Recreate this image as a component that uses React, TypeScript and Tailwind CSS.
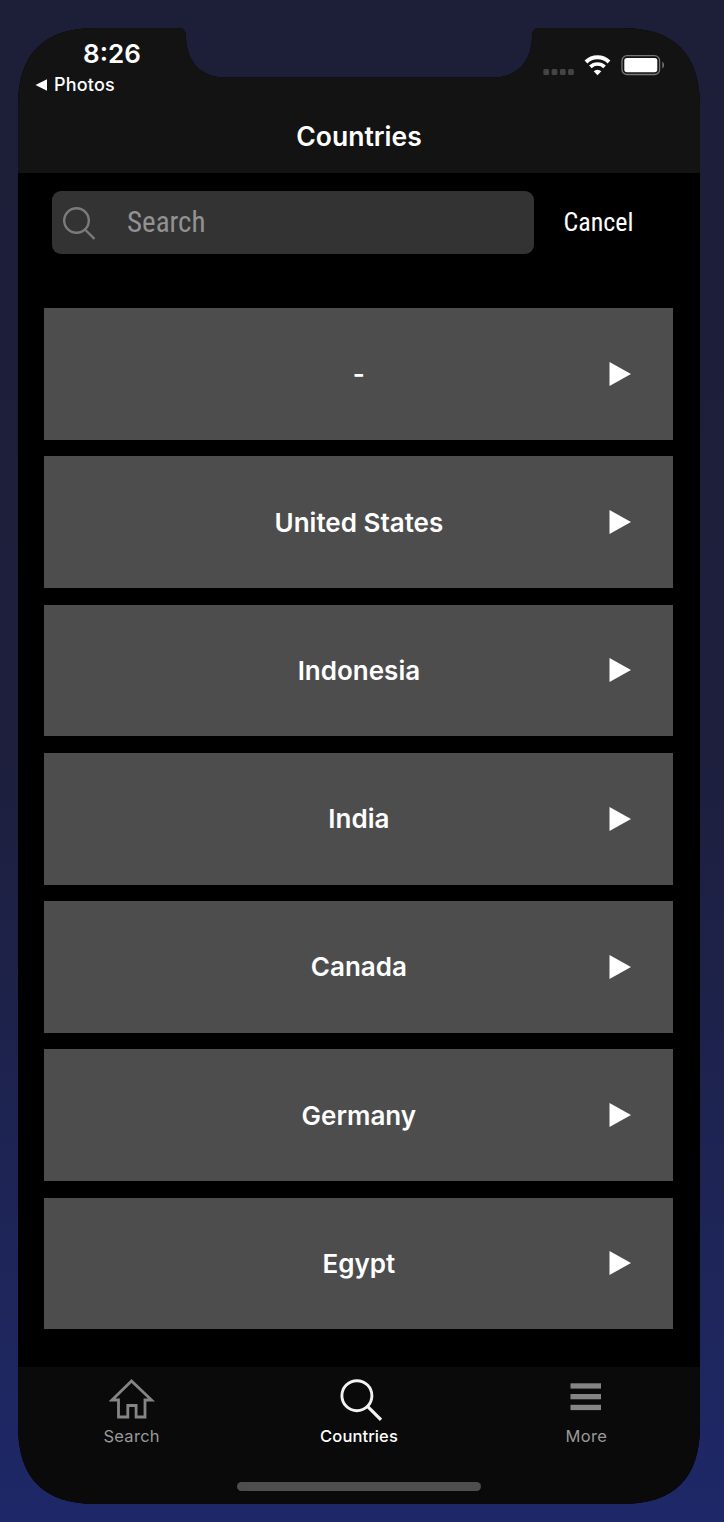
const countries = ['-', 'United States', 'Indonesia', 'India', 'Canada', 'Germany', 'Egypt'];

function StatusIcons() {
  return (
    <svg width="124" height="26" viewBox="0 0 124 26" className="block">
      <g fill="#444">
        <rect x="0.3" y="15" width="5.800" height="6" rx="1.500" />
        <rect x="8.600" y="15" width="5.800" height="6" rx="1.500" />
        <rect x="16.900" y="15" width="5.800" height="6" rx="1.500" />
        <rect x="25.100" y="15" width="5.800" height="6" rx="1.500" />
      </g>
      <g fill="none" stroke="#fff">
        <path d="M43 8a16.500 16.500 0 0 1 23 0" strokeWidth="4" />
        <path d="M47.400 12.900a10.200 10.200 0 0 1 14.200 0" strokeWidth="3.700" />
      </g>
      <path d="M54.500 21.200L50.700 17.300a5.500 5.500 0 0 1 7.600 0z" fill="#fff" />
      <rect x="79" y="1.700" width="37.600" height="18.800" rx="5" fill="none" stroke="#777" strokeWidth="1.300" />
      <rect x="81.300" y="4" width="33" height="14.200" rx="2.600" fill="#fff" />
      <path d="M119.300 7.500q1.800 1 1.800 3.600t-1.800 3.600z" fill="#777" />
    </svg>
  );
}

function HomeIcon() {
  return (
    <svg width="46" height="44" viewBox="0 0 46 44" fill="none" stroke="#858585" strokeWidth="2.800">
      <path d="M22.500 4L3 23h6.500V40h9.300V28.500h8.300V40H36V23h6.500Z" />
    </svg>
  );
}

function SearchIcon() {
  return (
    <svg width="46" height="44" viewBox="0 0 46 44" fill="none" stroke="#f2f2f2" strokeWidth="2.900">
      <circle cx="20.900" cy="18.700" r="15" />
      <path d="M31.500 29.300L45 42.800" strokeWidth="3.200" />
    </svg>
  );
}

function MenuIcon() {
  return (
    <svg width="46" height="44" viewBox="0 0 46 44" fill="#858585">
      <rect x="7.500" y="6.300" width="30.500" height="5.300" />
      <rect x="7.500" y="17" width="30.500" height="5.300" />
      <rect x="7.500" y="27.800" width="30.500" height="5.300" />
    </svg>
  );
}

export default function App() {
  return (
    <div className="h-[1522px] w-[724px] bg-linear-to-b from-[#1d1e37] via-[#1d1f3d] to-[#1e2868] pt-7 pl-[18px] font-['Inter',sans-serif] text-white">
      <div className="flex h-[1476px] w-[682px] flex-col bg-black [clip-path:path('M0_78C0_25.700_25.700_0_78_0H160C166_0_168_3_168_10C169_35_184_49.500_207_49.500H475C498_49.500_513_35_514_10C514_3_516_0_522_0H604C656.300_0_682_25.700_682_78V1398C682_1450.300_656.300_1476_604_1476H78C25.700_1476_0_1450.300_0_1398Z')]">
        <header className="h-[145px] shrink-0 bg-[#131313]">
          <div className="flex h-[79px] justify-between">
            <div className="pt-[10px] pl-[17px]">
              <div className="pl-[48px] text-[26px] leading-[32px] font-semibold">8:26</div>
              <div className="flex h-[30px] items-center gap-[7px] text-[18px] leading-[30px] font-medium tracking-[0.200px]">
                <svg width="12" height="12" viewBox="0 0 12 12" fill="currentColor"><path d="M.5 6L12 .3v11.400z" /></svg>
                <span>Photos</span>
              </div>
            </div>
            <div className="pt-[26px] pr-[33px]"><StatusIcons /></div>
          </div>
          <h1 className="pt-[11px] text-center text-[26.500px] leading-9 font-semibold">Countries</h1>
        </header>
        <div className="flex shrink-0 items-center pt-[18px] pl-[34px]">
          <div className="flex h-[63px] w-[481.500px] items-center rounded-[9px] bg-[#333] pl-[11px]">
            <svg width="32" height="34" viewBox="0 0 32 34" fill="none" stroke="#7d7b79" strokeWidth="2.400">
              <circle cx="13.500" cy="14.500" r="12.300" />
              <path d="M22.500 24L31.500 33" />
            </svg>
            <span className="ml-[32px] font-['Roboto_Condensed','Roboto',sans-serif] text-[29px] text-[#929292] font-stretch-condensed">Search</span>
          </div>
          <span className="ml-[30px] font-['Roboto_Condensed','Roboto',sans-serif] text-[26px] font-stretch-condensed">Cancel</span>
        </div>
        <ul className="flex h-[1059px] flex-col gap-[16.500px] pt-[54px] pl-[26.400px]">
          {countries.map((name) => (
            <li key={name} className="grid h-[131.750px] w-[629px] shrink-0 grid-cols-[64px_1fr_64px] items-center bg-[#4d4d4d]">
              <span className="col-start-2 text-center text-[26px] font-semibold">{name}</span>
              <svg width="22" height="26" viewBox="0 0 22 26" fill="white"><path d="M.5 1L22 13 .5 25z" /></svg>
            </li>
          ))}
        </ul>
        <footer className="mt-auto h-[137px] shrink-0 bg-[#0a0a0a]">
          <nav className="grid h-[115px] grid-cols-3 pt-[10px] text-[16.500px] leading-6 tracking-[0.300px]">
            <div className="flex flex-col items-center gap-[3px] text-[#999]"><HomeIcon /><span>Search</span></div>
            <div className="flex flex-col items-center gap-[3px]"><SearchIcon /><span className="font-medium tracking-[0.100px]">Countries</span></div>
            <div className="flex flex-col items-center gap-[3px] text-[#999]"><MenuIcon /><span>More</span></div>
          </nav>
          <div className="mx-auto h-[9px] w-[244px] rounded-full bg-[#4e4e4e]" />
        </footer>
      </div>
    </div>
  );
}
